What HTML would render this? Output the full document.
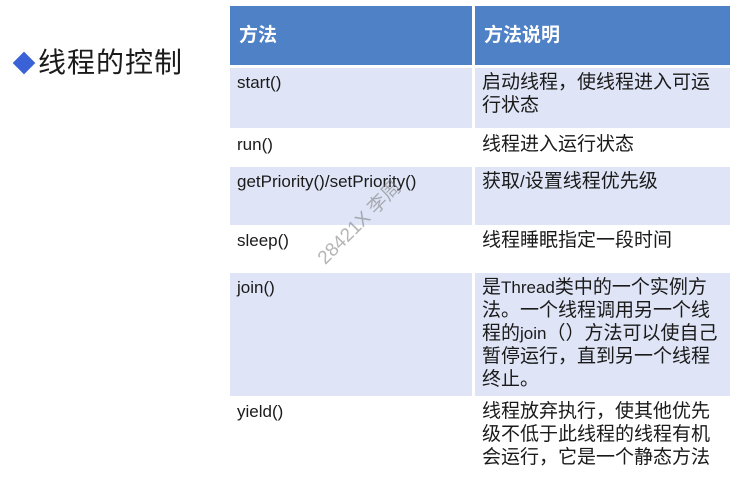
<!DOCTYPE html>
<html><head><meta charset="utf-8"><style>
body{margin:0;width:744px;height:483px;background:#fff;position:relative;overflow:hidden;font-family:"Liberation Sans","Noto Sans CJK SC",sans-serif;color:#1a1a1a}
.a{position:absolute}
.c{position:absolute;font-size:17px;line-height:23px;box-sizing:border-box;padding:3px 0 0 7px;white-space:nowrap}
.l{left:230px;width:242px}
.r{left:475px;width:255px;font-size:19px}
.r span{font-size:17px}
.lt{background:#dfe5f6}
.h{background:#4f81c7;color:#fff;font-weight:bold;font-size:19px;padding-top:18px}
</style></head><body>
<div class="a" style="left:16px;top:55px;width:16px;height:16px;background:#3a62d6;transform:rotate(45deg)"></div>
<div class="a" style="left:38px;top:45px;font-size:28px;line-height:36px;letter-spacing:1px">线程的控制</div>

<div class="c l h" style="top:6px;height:59px;padding-left:9px">方法</div>
<div class="c r h" style="top:6px;height:59px;padding-left:9px">方法说明</div>

<div class="c l lt" style="top:68px;height:60px">start()</div>
<div class="c r lt" style="top:68px;height:60px">启动线程，使线程进入可运<br>行状态</div>

<div class="c l" style="top:128px;height:39px;padding-top:5px">run()</div>
<div class="c r" style="top:128px;height:39px;padding-top:5px">线程进入运行状态</div>

<div class="c l lt" style="top:167px;height:58px">getPriority()/setPriority()</div>
<div class="c r lt" style="top:167px;height:58px">获取<span>/</span>设置线程优先级</div>

<div class="c l" style="top:226px;height:46px">sleep()</div>
<div class="c r" style="top:226px;height:46px">线程睡眠指定一段时间</div>

<div class="c l lt" style="top:273px;height:123px">join()</div>
<div class="c r lt" style="top:273px;height:123px">是<span>Thread</span>类中的一个实例方<br>法。一个线程调用另一个线<br>程的<span>join</span>（）方法可以使自己<br>暂停运行，直到另一个线程<br>终止。</div>

<div class="c l" style="top:397px;height:80px">yield()</div>
<div class="c r" style="top:397px;height:80px">线程放弃执行，使其他优先<br>级不低于此线程的线程有机<br>会运行，它是一个静态方法</div>

<div class="a" style="left:304px;top:208px;font-size:19px;color:rgba(120,120,120,.55);transform:rotate(-45deg);white-space:nowrap">28421X 李周</div>
</body></html>
